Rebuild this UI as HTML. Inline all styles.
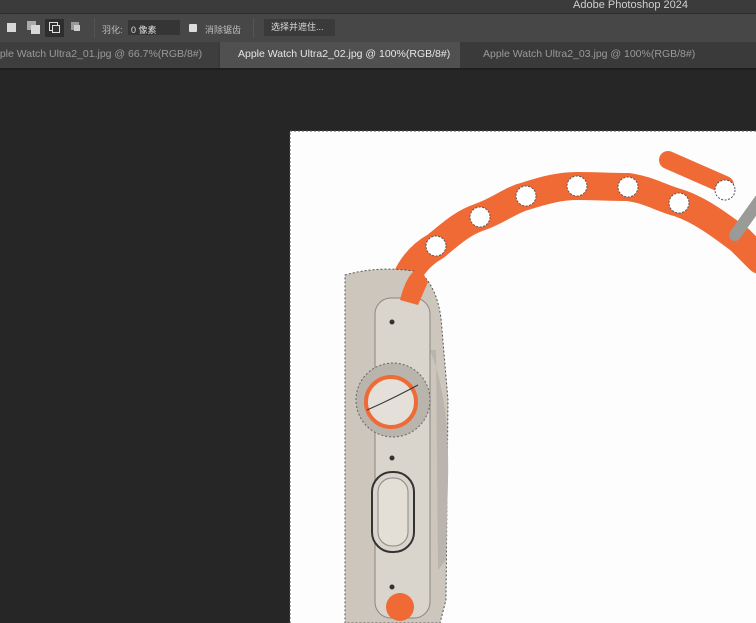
<!DOCTYPE html>
<html><head><meta charset="utf-8"><style>
body{margin:0;width:756px;height:623px;overflow:hidden;background:#262626;font-family:"Liberation Sans","Noto Sans CJK SC",sans-serif;position:relative}
.title{position:absolute;left:0;top:0;width:756px;height:13px;background:#3b3b3b;border-bottom:1px solid #2c2c2c}
.title span{position:absolute;left:573px;top:-1px;font-size:11px;color:#cfcfcf}
.opt{position:absolute;left:0;top:14px;width:756px;height:28px;background:#474747;font-size:9px;color:#bdbdbd}
.tabs{position:absolute;left:0;top:42px;width:756px;height:26px;background:#3a3a3a;font-size:10.5px;color:#9a9a9a}
.tab{position:absolute;top:0;height:26px;line-height:24px;white-space:nowrap}
.sq{position:absolute;top:9px;width:9px;height:9px;background:#d8d8d8}
</style></head><body>
<div class="title"><span>Adobe Photoshop 2024</span></div>
<div class="opt">
<div class="sq" style="left:7px"></div>
<div class="sq" style="left:27px;top:7px;background:#aaa"></div><div class="sq" style="left:31px;top:11px"></div>
<div style="position:absolute;left:45px;top:5px;width:19px;height:18px;background:#2e2e2e"></div>
<div class="sq" style="left:49px;top:8px;background:none;border:1px solid #ddd;width:7px;height:7px"></div><div class="sq" style="left:52px;top:11px;background:#333;border:1px solid #ddd;width:6px;height:6px"></div>
<div class="sq" style="left:71px;top:8px;background:#999;width:8px;height:8px"></div><div class="sq" style="left:74px;top:11px;background:#ccc;width:6px;height:6px"></div>
<div style="position:absolute;left:94px;top:4px;width:1px;height:20px;background:#555"></div>
<span style="position:absolute;left:102px;top:9px">羽化:</span>
<div style="position:absolute;left:128px;top:6px;width:52px;height:15px;background:#353535"></div>
<span style="position:absolute;left:131px;top:9px;color:#ddd">0 像素</span>
<div style="position:absolute;left:189px;top:10px;width:8px;height:8px;background:#ddd;border-radius:1px"></div>
<span style="position:absolute;left:205px;top:9px">消除锯齿</span>
<div style="position:absolute;left:253px;top:4px;width:1px;height:20px;background:#555"></div>
<div style="position:absolute;left:264px;top:5px;width:71px;height:17px;background:#3a3a3a;color:#ddd;line-height:17px;padding-left:7px;box-sizing:border-box">选择并遮住...</div>
</div>
<div class="tabs">
<div class="tab" style="left:0;width:218px;background:#3e3e3e"><span style="margin-left:-6px">pple Watch Ultra2_01.jpg @ 66.7%(RGB/8#)</span></div>
<div class="tab" style="left:220px;width:240px;background:#505050;color:#e6e6e6;padding-left:18px;box-sizing:border-box">Apple Watch Ultra2_02.jpg @ 100%(RGB/8#)</div>
<div class="tab" style="left:461px;width:200px;background:#3a3a3a;padding-left:22px;box-sizing:border-box">Apple Watch Ultra2_03.jpg @ 100%(RGB/8#)</div>
</div>
<div style="position:absolute;left:0;top:68px;width:756px;height:2px;background:#1e1e1e"></div>
<svg style="position:absolute;left:0;top:0" width="756" height="623">
<rect x="290" y="131" width="470" height="500" fill="#fdfdfd" stroke="#555" stroke-dasharray="2 2"/>
<path d="M400,300 C405,270 420,255 436,246 C455,230 465,222 480,217 C500,210 510,200 526,196 C545,190 560,186 577,186 C595,186 610,187 628,187 C650,190 660,198 679,203 C700,210 720,225 740,240 L760,260" fill="none" stroke="#ef6a35" stroke-width="28" stroke-linecap="round"/>
<path d="M668,160 L725,185" stroke="#ef6a35" stroke-width="18" stroke-linecap="round"/>
<g fill="#fff" stroke="#555" stroke-dasharray="2 1.5"><circle cx="436" cy="246" r="10"/><circle cx="480" cy="217" r="10"/><circle cx="526" cy="196" r="10"/><circle cx="577" cy="186" r="10"/><circle cx="628" cy="187" r="10"/><circle cx="679" cy="203" r="10"/><circle cx="725" cy="190" r="10"/></g>
<path d="M735,235 L760,200" stroke="#9a9a98" stroke-width="12" stroke-linecap="round"/>
<path d="M345,275 Q380,265 420,272 Q440,290 442,330 L448,400 L446,600 L440,623 L345,623 Z" fill="#ccc6bc" stroke="#555" stroke-dasharray="2 2"/>
<path d="M430,350 Q450,400 448,480 L446,560 L438,570 L436,350 Z" fill="#b9b4ad"/>
<rect x="375" y="298" width="55" height="320" rx="16" fill="#d9d4cc" stroke="#8a857e"/>
<path d="M400,300 C405,280 412,270 420,268 L428,282 L418,305 Z" fill="#ef6a35"/>
<ellipse cx="400" cy="607" rx="14" ry="14" fill="#ef6a35"/>
<circle cx="393" cy="400" r="37" fill="#b9b4ac" stroke="#666" stroke-dasharray="2 2"/>
<circle cx="391" cy="402" r="25" fill="#e4e0d9" stroke="#ef6a35" stroke-width="4"/>
<path d="M367,410 Q390,400 418,385" stroke="#333" fill="none"/>
<circle cx="392" cy="322" r="2.5" fill="#333"/><circle cx="392" cy="458" r="2.5" fill="#333"/><circle cx="392" cy="587" r="2.5" fill="#333"/>
<rect x="372" y="472" width="42" height="80" rx="20" fill="#d9d4cc" stroke="#333" stroke-width="2"/>
<rect x="378" y="478" width="30" height="68" rx="14" fill="#e3ded6" stroke="#888"/>
</svg>
</body></html>
